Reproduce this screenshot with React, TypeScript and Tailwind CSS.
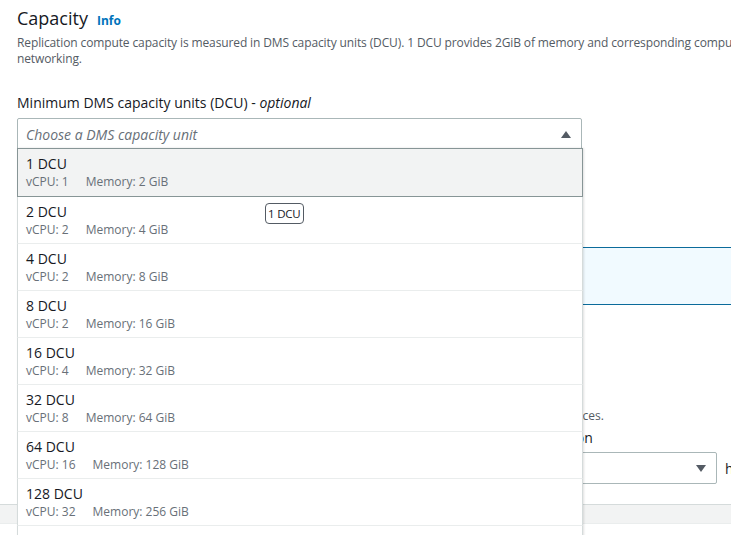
import React from "react";

const DCU_OPTIONS = [
  { dcu: 1, cpu: 1, mem: 2 },
  { dcu: 2, cpu: 2, mem: 4 },
  { dcu: 4, cpu: 2, mem: 8 },
  { dcu: 8, cpu: 2, mem: 16 },
  { dcu: 16, cpu: 4, mem: 32 },
  { dcu: 32, cpu: 8, mem: 64 },
  { dcu: 64, cpu: 16, mem: 128 },
  { dcu: 128, cpu: 32, mem: 256 },
  { dcu: 192, cpu: 48, mem: 384 },
];

function Caret({ up }: { up?: boolean }) {
  return (
    <svg width="10" height="7" viewBox="0 0 10 7" className="shrink-0">
      {up ? <path d="M5 0 L10 7 L0 7 Z" fill="#545b64" /> : <path d="M0 0 L10 0 L5 7 Z" fill="#545b64" />}
    </svg>
  );
}

function Select({ width, placeholder, up }: { width: string; placeholder?: string; up?: boolean }) {
  return (
    <div className={`${width} h-8 flex items-center justify-between border border-[#aab7b8] rounded-[2px] bg-white pl-[8px] pr-[10px]`}>
      <span className="text-[14px] italic text-[#687078]">{placeholder}</span>
      <Caret up={up} />
    </div>
  );
}

function DcuDropdown() {
  return (
    <div className="absolute left-0 top-[30px] w-[566px] bg-white z-10 shadow-[1px_0_2px_rgba(0,0,0,0.12)]">
      {DCU_OPTIONS.map((o, idx) => (
        <div
          key={o.dcu}
          className={
            idx === 0
              ? "border border-[#879596] bg-[#f2f3f3] pl-[8px] pt-[5px] pb-[6px]"
              : "border-x border-b border-x-[#d5dbdb] border-b-[#eaeded] pl-[8px] py-[5px]"
          }
        >
          <div className="text-[14px] leading-5 text-[#16191f]">{o.dcu} DCU</div>
          <div className="flex gap-[17px] text-[12px] leading-4 text-[#687078]">
            <span>vCPU: {o.cpu}</span>
            <span>Memory: {o.mem} GiB</span>
          </div>
        </div>
      ))}
      <div className="absolute left-[248px] top-[55px] h-[21px] px-[2px] flex items-center border border-[#545b64] rounded-[4px] bg-white text-[11.5px] tracking-[-0.2px] text-[#16191f]">
        1 DCU
      </div>
    </div>
  );
}

export default function App() {
  return (
    <div className="w-[731px] h-[535px] overflow-hidden bg-white font-['Open_Sans',sans-serif] text-[#16191f]">
      <div className="w-[820px] px-[17px] pt-[7px]">
        <div className="flex items-baseline gap-[9px]">
          <h2 className="text-[18px] leading-[22px]">Capacity</h2>
          <a className="text-[12px] font-bold text-[#0073bb]">Info</a>
        </div>
        <p className="mt-[5px] text-[12px] leading-4 tracking-[-0.12px] text-[#545b64]">
          <span className="whitespace-nowrap">
            Replication compute capacity is measured in DMS capacity units (DCU). 1 DCU provides 2GiB of memory and corresponding compute and
          </span>
          <br />
          networking.
        </p>

        <label className="block mt-[26px] text-[14px] leading-5">
          Minimum DMS capacity units (DCU) - <i>optional</i>
        </label>
        <div className="relative mt-[5px] w-[565px]">
          <Select width="w-[565px]" placeholder="Choose a DMS capacity unit" up />
          <DcuDropdown />
        </div>

        <label className="block mt-[20px] text-[14px] leading-5">
          Maximum DMS capacity units (DCU) - <i>optional</i>
        </label>
        <div className="mt-[6px]">
          <Select width="w-[565px]" placeholder="Choose a DMS capacity unit" />
        </div>

        <div className="mt-[19px] h-[58px] border-y border-[#0b6b9b] bg-[#f1faff] px-[20px] flex items-center text-[13px]">
          Capacity is scaled automatically between the minimum and maximum values.
        </div>

        <label className="block mt-[20px] text-[14px] leading-5">High availability</label>
        <div className="mt-[6px]">
          <Select width="w-[565px]" placeholder="Single-AZ" />
        </div>

        <div className="mt-[5px] text-[14px] leading-5">Maintenance window</div>
        <p className="text-[12px] leading-4 text-[#545b64] whitespace-nowrap">
          Choose a weekly time window during which system maintenance can occur on your replication instances.
        </p>

        <div className="mt-[4px] flex gap-[16px]">
          <div className="w-[250px]">
            <div className="text-[14px] leading-5">Start day</div>
            <div className="mt-[4px]">
              <Select width="w-[250px]" placeholder="Sunday" />
            </div>
          </div>
          <div className="w-[236px]">
            <div className="text-[14px] leading-5">Start time</div>
            <div className="mt-[4px]">
              <Select width="w-[236px]" placeholder="00:00" />
            </div>
          </div>
          <div>
            <div className="text-[14px] leading-5">Duration</div>
            <div className="mt-[4px] flex items-center gap-[8px]">
              <Select width="w-[182px]" />
              <span className="text-[14px]">hours</span>
            </div>
          </div>
        </div>
      </div>

      <div className="mt-[20px] h-[20px] border-y border-t-[#d5dbdb] border-b-[#eaeded] bg-[#f2f3f3]" />
    </div>
  );
}
